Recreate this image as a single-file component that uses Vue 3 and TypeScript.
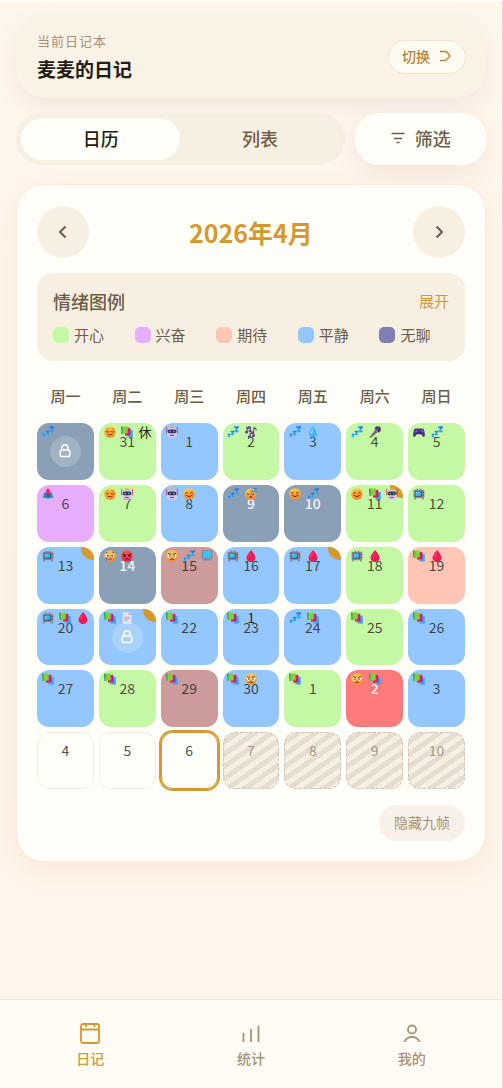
<script setup lang="ts">
import { ref } from 'vue'

type Tone =
  | 'happy' | 'excited' | 'expect' | 'calm' | 'mist' | 'rose' | 'angry' | 'blank' | 'future'

interface Day {
  n: number
  tone: Tone
  marks?: string[]
  corner?: boolean
  locked?: boolean
  today?: boolean
}

const view = ref<'calendar' | 'list'>('calendar')
const weekdays = ['周一', '周二', '周三', '周四', '周五', '周六', '周日']
const moods: { name: string; tone: string }[] = [
  { name: '开心', tone: 'happy' },
  { name: '兴奋', tone: 'excited' },
  { name: '期待', tone: 'expect' },
  { name: '平静', tone: 'calm' },
  { name: '无聊', tone: 'bored' },
]

const days: Day[] = [
  { n: 30, tone: 'mist', marks: ['zzz'], locked: true },
  { n: 31, tone: 'happy', marks: ['relief', 'books', '休'] },
  { n: 1, tone: 'calm', marks: ['robot'] },
  { n: 2, tone: 'happy', marks: ['zzz', 'notes'] },
  { n: 3, tone: 'calm', marks: ['zzz', 'drop'] },
  { n: 4, tone: 'happy', marks: ['zzz', 'mic'] },
  { n: 5, tone: 'happy', marks: ['game', 'zzz'] },
  { n: 6, tone: 'excited', marks: ['outbox'] },
  { n: 7, tone: 'happy', marks: ['relief', 'robot'] },
  { n: 8, tone: 'calm', marks: ['robot', 'smile'] },
  { n: 9, tone: 'mist', marks: ['zzz', 'sleep'] },
  { n: 10, tone: 'mist', marks: ['smile', 'zzz'] },
  { n: 11, tone: 'happy', marks: ['smile', 'books', 'robot'], corner: true },
  { n: 12, tone: 'happy', marks: ['tv'] },
  { n: 13, tone: 'calm', marks: ['tv'], corner: true },
  { n: 14, tone: 'mist', marks: ['cry', 'rage'] },
  { n: 15, tone: 'rose', marks: ['mad', 'zzz', 'laptop'] },
  { n: 16, tone: 'calm', marks: ['tv', 'blood'] },
  { n: 17, tone: 'calm', marks: ['tv', 'blood'], corner: true },
  { n: 18, tone: 'happy', marks: ['tv', 'blood'] },
  { n: 19, tone: 'expect', marks: ['books', 'blood'] },
  { n: 20, tone: 'calm', marks: ['tv', 'books', 'blood'] },
  { n: 21, tone: 'calm', marks: ['books', 'page'], corner: true, locked: true },
  { n: 22, tone: 'calm', marks: ['books'] },
  { n: 23, tone: 'calm', marks: ['books', '1'] },
  { n: 24, tone: 'calm', marks: ['zzz', 'books'] },
  { n: 25, tone: 'happy', marks: ['books'] },
  { n: 26, tone: 'calm', marks: ['books'] },
  { n: 27, tone: 'calm', marks: ['books'] },
  { n: 28, tone: 'happy', marks: ['books'] },
  { n: 29, tone: 'rose', marks: ['books'] },
  { n: 30, tone: 'calm', marks: ['books', 'mad'] },
  { n: 1, tone: 'happy', marks: ['books'] },
  { n: 2, tone: 'angry', marks: ['mad', 'books'] },
  { n: 3, tone: 'calm', marks: ['books'] },
  { n: 4, tone: 'blank' },
  { n: 5, tone: 'blank' },
  { n: 6, tone: 'blank', today: true },
  { n: 7, tone: 'future' },
  { n: 8, tone: 'future' },
  { n: 9, tone: 'future' },
  { n: 10, tone: 'future' },
]

const isText = (mark: string): boolean => mark === '休' || mark === '1'
</script>

<template>
  <div class="page">
    <svg class="sprite" aria-hidden="true">
      <defs>
        <linearGradient id="g-face" x1="0" y1="0" x2="0.3" y2="1">
          <stop offset="0" stop-color="#ffd445" />
          <stop offset="1" stop-color="#f98a2c" />
        </linearGradient>
        <linearGradient id="g-rage" x1="0" y1="0" x2="0" y2="1">
          <stop offset="0" stop-color="#ff5a3c" />
          <stop offset="1" stop-color="#e2205c" />
        </linearGradient>
        <linearGradient id="g-z" x1="1" y1="0" x2="0" y2="1">
          <stop offset="0" stop-color="#1769f0" />
          <stop offset="1" stop-color="#38c6f8" />
        </linearGradient>
        <linearGradient id="g-screen" x1="0" y1="0" x2="1" y2="1">
          <stop offset="0" stop-color="#4fdcff" />
          <stop offset="1" stop-color="#2a93d6" />
        </linearGradient>
        <linearGradient id="g-book" x1="0" y1="0" x2="1" y2="1">
          <stop offset="0" stop-color="#2fd3ec" />
          <stop offset="1" stop-color="#4a8bf4" />
        </linearGradient>
      </defs>
      <symbol id="m-relief" viewBox="0 0 16 16">
        <circle cx="8" cy="8" r="7.8" fill="url(#g-face)" />
        <path d="M2.6 7.5q1.9 1.6 3.8 0M9.6 7.5q1.9 1.6 3.8 0M5.5 11.2q2.5 1.6 5 0" fill="none" stroke="#6b2b1d" stroke-width="1.2" stroke-linecap="round" />
        <path d="M3 4.6q1-1 2.4-.9M10.6 3.7q1.4-.1 2.4.9" fill="none" stroke="#b76212" />
      </symbol>
      <symbol id="m-smile" viewBox="0 0 16 16">
        <circle cx="8" cy="8" r="7.8" fill="url(#g-face)" />
        <ellipse cx="3.3" cy="9.6" rx="2" ry="1.4" fill="#ff6650" opacity=".5" />
        <ellipse cx="12.7" cy="9.6" rx="2" ry="1.4" fill="#ff6650" opacity=".5" />
        <path d="M3.3 6.8q1.4-2 2.9 0M9.8 6.8q1.4-2 2.9 0M4.8 10.2q3.2 3 6.4 0" fill="none" stroke="#5a241d" stroke-width="1.3" stroke-linecap="round" />
      </symbol>
      <symbol id="m-sleep" viewBox="0 0 16 16">
        <circle cx="7.8" cy="8.2" r="7.6" fill="url(#g-face)" />
        <path d="M2.4 7.9q1.8 1.4 3.7 0M8.4 7.9q1.8 1.4 3.7 0" fill="none" stroke="#5a241d" stroke-width="1.2" />
        <ellipse cx="7.6" cy="12" rx="1.7" ry="1.8" fill="#c72056" />
        <path d="M11.2.8h4l-3.6 4.1h4M8.3 3h2L8.5 5.2h2" fill="none" stroke="#2584f3" stroke-width="1.3" />
      </symbol>
      <symbol id="m-cry" viewBox="0 0 16 16">
        <circle cx="8" cy="8" r="7.8" fill="url(#g-face)" />
        <circle cx="4.8" cy="7.2" r="2.2" fill="#fff" />
        <circle cx="11.2" cy="7.2" r="2.2" fill="#fff" />
        <circle cx="5.1" cy="7.5" r="1.2" fill="#3d2438" />
        <circle cx="10.9" cy="7.5" r="1.2" fill="#3d2438" />
        <path d="M2.6 4.1l2.5-1.4M10.9 2.7l2.5 1.4M6 12.4q2-1.6 4 0" fill="none" stroke="#6f3517" stroke-width="1.1" />
        <path d="M3.3 9.3q-3 4 0 5.2 3-1.2 0-5.2" fill="#2287f5" />
      </symbol>
      <symbol id="m-mad" viewBox="0 0 16 16">
        <circle cx="8" cy="8" r="7.8" fill="url(#g-face)" />
        <circle cx="4.7" cy="7.8" r="2.5" fill="#fff" />
        <circle cx="11.3" cy="7.8" r="2.5" fill="#fff" />
        <circle cx="5.2" cy="8.1" r="1.1" fill="#412a35" />
        <circle cx="10.8" cy="8.1" r="1.1" fill="#412a35" />
        <path d="M2.8 4.5l3.8 1.8M13.2 4.5L9.4 6.3M5.5 12.8q2.5-2 5 0" fill="none" stroke="#5b291f" stroke-width="1.2" />
      </symbol>
      <symbol id="m-rage" viewBox="0 0 16 16">
        <circle cx="8" cy="8" r="7.8" fill="url(#g-rage)" />
        <circle cx="4.7" cy="8" r="1.5" fill="#4d1431" />
        <circle cx="11.3" cy="8" r="1.5" fill="#4d1431" />
        <path d="M2.4 5.1l4.3 1.9M13.6 5.1L9.3 7M5.4 12.3q2.6-2.2 5.2 0" fill="none" stroke="#4d1431" stroke-width="1.3" />
      </symbol>
      <symbol id="m-zzz" viewBox="0 0 16 16">
        <g fill="none" stroke="url(#g-z)" stroke-linejoin="round">
          <path d="M9.2 1.8l5.7-.5-4.500 6.200 5-.4" stroke-width="2.2" />
          <path d="M4.600 7.500l4-.3-3 4.100 3.800-.3" stroke-width="1.800" />
          <path d="M.8 11.300l2.900-.2-2.500 3.300 3-.2" stroke-width="1.400" />
        </g>
      </symbol>
      <symbol id="m-books" viewBox="0 0 16 16">
        <path d="M7.500 5.300l8.200-.3v10.300H8.600z" fill="url(#g-book)" />
        <path d="M4 3l8.300-.6v9.800l-6.700.7z" fill="#e62250" />
        <path d="M10.700 3.500h1.600v8.600h-1.600z" fill="#a91ea0" />
        <path d="M0 1l8.900-.7v9.300L.8 10.700z" fill="#82cf43" />
        <path d="M0 1l2-.2v9.800l-1.200.1z" fill="#309a59" />
      </symbol>
      <symbol id="m-robot" viewBox="0 0 16 16">
        <path d="M.9 1v9M15.100 1v9" stroke="#e02e6d" stroke-width="1.200" />
        <ellipse cx="8" cy="2.100" rx="3.100" ry="1.800" fill="#f2aa2b" />
        <path d="M3.200 2.600h9.600l1.800 8.900q-.6 4.200-6.600 4.200t-6.600-4.200z" fill="#d9c5ea" />
        <rect x="2.200" y="4.700" width="11.600" height="5" rx="2.400" fill="#302f54" />
        <circle cx="5.500" cy="7.200" r="1.200" fill="#25bce8" />
        <circle cx="10.500" cy="7.200" r="1.200" fill="#25bce8" />
        <path d="M5.500 12.600h5" stroke="#5d4170" stroke-width="1.300" />
      </symbol>
      <symbol id="m-notes" viewBox="0 0 16 16">
        <g fill="#67458d" stroke="#67458d" stroke-width="1.500">
          <ellipse cx="2" cy="8.200" rx="1.400" ry="1.100" />
          <ellipse cx="6.600" cy="6.800" rx="1.200" ry="1" />
          <path d="M3.300 8L2.200 2.200 6.700.9l1.100 5.700M2.300 3.800l4.600-1.300" fill="none" />
          <ellipse cx="10" cy="8.600" rx="1.300" ry="1" />
          <path d="M11.200 8.500l.8-6.300q2.800.4 3.200 3.800" fill="none" />
          <ellipse cx="6" cy="14.300" rx="1.400" ry="1.100" />
          <ellipse cx="11" cy="13.300" rx="1.400" ry="1.100" />
          <path d="M7.300 14l-.5-3.600 5-.8.500 3.500" fill="none" />
        </g>
      </symbol>
      <symbol id="m-drop" viewBox="0 0 16 16">
        <path d="M8 0Q3 6.800 3 10.400a5 5 0 0 0 10 0Q13 6.800 8 0" fill="#3fb0f0" />
        <path d="M8 2Q4.600 8 5 11q3 1 3-9" fill="#8fe0ff" />
      </symbol>
      <symbol id="m-blood" viewBox="0 0 16 16">
        <path d="M8.200 0Q2 6.800 2 10.200a6 6 0 0 0 12 0Q14 6.800 8.200 0" fill="#f01a55" />
        <path d="M8 2Q4 7.500 4.200 10q2 .7 3.800-8" fill="#ff4a72" />
      </symbol>
      <symbol id="m-mic" viewBox="0 0 16 16">
        <path d="M7.800 5.500l3 3-8.200 7.200q-1.600.5-1.500-1z" fill="#77677c" />
        <circle cx="11.800" cy="4.300" r="4.100" fill="#45354d" />
        <path d="M8.100 4.500l3.600 3.700" stroke="#b59cc0" stroke-width="1.400" />
        <path d="M11 2l3 3M13 1.400L9.800 4.600" stroke="#8d7893" stroke-width=".8" />
      </symbol>
      <symbol id="m-game" viewBox="0 0 16 16">
        <path d="M3.300 3.200h9.400q2.100 0 2.600 4l.6 5.400q-.8 3.200-3.400.6L10.800 11H5.200l-1.700 2.200q-2.600 2.600-3.400-.6l.6-5.400q.5-4 2.600-4" fill="#49318c" />
        <path d="M2.800 6.800h3M4.300 5.300v3" stroke="#8a75cf" />
        <circle cx="11.700" cy="5.400" r=".9" fill="#f05375" />
        <circle cx="13.100" cy="7" r=".9" fill="#3fc3e8" />
        <circle cx="6.500" cy="9" r="1.200" fill="#271953" />
        <circle cx="10" cy="9" r="1.200" fill="#271953" />
      </symbol>
      <symbol id="m-outbox" viewBox="0 0 16 16">
        <path d="M3 6h10l2.500 9.400H.5z" fill="#2d7fc4" />
        <path d="M.9 13h3.900l1 1h4.400l1-1h3.900l.4 2.600H.5z" fill="#c3cfe2" />
        <path d="M6.300 5h3.400v6.500H6.300z" fill="#7b3a72" />
        <path d="M8 0l3.700 4.800H9.700v3H6.300v-3h-2z" fill="#e72756" />
      </symbol>
      <symbol id="m-tv" viewBox="0 0 16 16">
        <path d="M5 .8l2 2M11 .8l-2 2M3.500 12l-1 3.500M12.500 12l1 3.500" stroke="#695263" stroke-width="1.300" />
        <rect x=".8" y="2.300" width="14.400" height="11.200" rx="1.400" fill="#9a8796" />
        <rect x="2.400" y="3.800" width="9.400" height="8.200" rx="1.200" fill="#4a4a5e" />
        <rect x="3.400" y="4.800" width="7.400" height="6.200" rx=".8" fill="url(#g-screen)" />
        <circle cx="13.500" cy="6" r=".9" fill="#493b51" />
        <circle cx="13.500" cy="9.500" r=".9" fill="#493b51" />
      </symbol>
      <symbol id="m-laptop" viewBox="0 0 16 16">
        <rect x="1" y=".5" width="14" height="10.900" rx="1" fill="#5f6f8c" />
        <rect x="1.900" y="1.300" width="12.200" height="9.200" fill="#3fc1f2" />
        <path d="M1.400 11.800h13.200l1.400 3H0z" fill="#a9a1b8" />
        <path d="M2.400 13h11.200" stroke="#656178" stroke-width=".8" />
      </symbol>
      <symbol id="m-page" viewBox="0 0 16 16">
        <path d="M2.300.2h7.900l3.800 3.900v11.700H2.300z" fill="#e5e1ee" />
        <path d="M10.200.2v3.900H14z" fill="#bcb2d1" />
        <path d="M4.400 7h7M4.400 9.100h7M4.400 11.200h4" stroke="#a69ab9" />
      </symbol>
    </svg>

    <main class="content">
      <header class="book">
        <div>
          <p class="book-label">当前日记本</p>
          <h1 class="book-name">麦麦的日记</h1>
        </div>
        <button class="switch" type="button">
          切换
          <svg width="14" height="14" viewBox="0 0 14 14" aria-hidden="true">
            <path d="M2 2.500h5.500Q9 2.500 12 7.200L9.500 9.500 7.500 11.500H2M9.500 4.200L12 7.200" fill="none" stroke="currentColor" stroke-width="1.300" />
          </svg>
        </button>
      </header>

      <div class="toolbar">
        <div class="tabs" role="tablist">
          <button class="tab" type="button" role="tab" :aria-selected="view === 'calendar'" :class="{ active: view === 'calendar' }" @click="view = 'calendar'">日历</button>
          <button class="tab" type="button" role="tab" :aria-selected="view === 'list'" :class="{ active: view === 'list' }" @click="view = 'list'">列表</button>
        </div>
        <button class="filter" type="button">
          <svg width="16" height="16" viewBox="0 0 16 16" aria-hidden="true">
            <path d="M1.500 3.500h13M4 8.500h8M6.500 12.500h3" stroke="currentColor" stroke-width="1.300" />
          </svg>
          筛选
        </button>
      </div>

      <section class="card">
        <div class="month">
          <button class="arrow" type="button" aria-label="上个月">
            <svg width="16" height="16" viewBox="0 0 16 16" aria-hidden="true"><path d="M10.500 2.500L5 8l5.500 5.500" /></svg>
          </button>
          <h2 class="month-name">2026年4月</h2>
          <button class="arrow" type="button" aria-label="下个月">
            <svg width="16" height="16" viewBox="0 0 16 16" aria-hidden="true"><path d="M5.500 2.500L11 8l-5.500 5.500" /></svg>
          </button>
        </div>

        <div class="legend">
          <div class="legend-head">
            <h3 class="legend-title">情绪图例</h3>
            <button class="expand" type="button">展开</button>
          </div>
          <ul class="moods">
            <li v-for="m in moods" :key="m.name"><span class="swatch" :class="m.tone"></span>{{ m.name }}</li>
          </ul>
        </div>

        <div class="week">
          <span v-for="w in weekdays" :key="w">{{ w }}</span>
        </div>

        <div class="days">
          <button v-for="(d, i) in days" :key="i" class="day" type="button" :class="[d.tone, { today: d.today }]" :disabled="d.tone === 'future'">
            <span v-if="!d.locked" class="num">{{ d.n }}</span>
            <span v-if="d.corner" class="corner"></span>
            <span v-if="d.marks" class="marks">
              <span v-for="mark in d.marks" :key="mark" class="mark">
                <template v-if="isText(mark)">{{ mark }}</template>
                <svg v-else width="12" height="12" aria-hidden="true"><use :href="'#m-' + mark" /></svg>
              </span>
            </span>
            <span v-if="d.locked" class="lock">
              <svg width="16" height="16" viewBox="0 0 16 16" aria-hidden="true">
                <rect x="3.200" y="7" width="9.600" height="6.600" rx="1.600" />
                <path d="M5 7V4.800a3 3 0 0 1 6 0V7" />
              </svg>
            </span>
          </button>
        </div>

        <div class="card-foot">
          <button class="hide" type="button">隐藏九帧</button>
        </div>
      </section>
    </main>

    <nav class="nav">
      <a class="nav-item current" href="#diary" aria-current="page">
        <svg width="24" height="24" viewBox="0 0 24 24" aria-hidden="true">
          <rect x="3" y="3" width="18" height="19" rx="2" /><path d="M3 8.500h18M8 2v4M16.500 2v4" />
        </svg>
        日记
      </a>
      <a class="nav-item" href="#stats">
        <svg width="24" height="24" viewBox="0 0 24 24" aria-hidden="true"><path d="M4.500 12v9M12 8v13M19.500 4.500V21" /></svg>
        统计
      </a>
      <a class="nav-item" href="#me">
        <svg width="24" height="24" viewBox="0 0 24 24" aria-hidden="true">
          <circle cx="12" cy="8.500" r="4" /><path d="M4.500 21q2-5 7.500-5t7.500 5" />
        </svg>
        我的
      </a>
    </nav>
  </div>
</template>

<style>
body {
  margin: 0;
  background: #fff6ec;
}
</style>

<style scoped>
.page {
  box-sizing: border-box;
  min-height: 100vh;
  display: flex;
  flex-direction: column;
  border-top: 1px solid #fff;
  border-right: 1px solid #d6d6d6;
  background: linear-gradient(180deg, #fff7ed, #fff5ea);
  color: #6d5c48;
  font-family: "Noto Sans CJK SC", "Noto Sans", sans-serif;
}
.sprite {
  position: absolute;
  width: 0;
  height: 0;
}
button {
  margin: 0;
  padding: 0;
  border: 0;
  background: none;
  color: inherit;
  font: inherit;
}
h1, h2, h3, p, ul {
  margin: 0;
  padding: 0;
}
.content {
  flex: 1;
  padding: 15px 16px 24px;
}
.book {
  display: flex;
  align-items: center;
  justify-content: space-between;
  padding: 15px 20px 15px 21px;
  border-radius: 30px;
  background: #faf2e5;
  box-shadow: 0 8px 24px rgba(120, 80, 100, 0.1);
}
.book-label {
  color: #a6917d;
  font-size: 13px;
  line-height: 20px;
  letter-spacing: 1px;
}
.book-name {
  margin-top: 4px;
  color: #241c14;
  font-size: 19px;
  line-height: 28px;
  font-weight: 700;
}
.switch {
  display: flex;
  align-items: center;
  gap: 8px;
  padding: 0 13px 2px;
  height: 34px;
  border: 1px solid #f3e4c8;
  border-radius: 17px;
  background: #fffbf3;
  color: #b98233;
  font-size: 14px;
  font-weight: 500;
}
.toolbar {
  display: grid;
  grid-template-columns: 5fr 2fr;
  gap: 10px;
  margin-top: 15px;
}
.tabs {
  display: flex;
  padding: 5px;
  border-radius: 26px;
  background: #f7efe2;
}
.tab {
  flex: 1;
  height: 42px;
  padding-bottom: 2px;
  border-radius: 21px;
  font-size: 18px;
  font-weight: 500;
}
.tab.active {
  background: #fffef9;
  color: #241c14;
}
.filter {
  display: flex;
  align-items: center;
  justify-content: center;
  gap: 9px;
  padding-bottom: 2px;
  border-radius: 24px;
  background: #fffef9;
  box-shadow: 0 8px 24px rgba(120, 80, 100, 0.1);
  font-size: 18px;
  font-weight: 500;
}
.card {
  margin-top: 19px;
  padding: 21px 20px 20px;
  border: 1px solid #f6ebdd;
  border-radius: 28px;
  background: #fffef9;
  box-shadow: 0 8px 30px rgba(190, 120, 60, 0.1);
}
.month {
  display: flex;
  align-items: center;
  justify-content: space-between;
}
.arrow {
  display: grid;
  place-items: center;
  width: 52px;
  height: 52px;
  border-radius: 50%;
  background: #f7efe2;
}
.arrow path {
  fill: none;
  stroke: #6d5c48;
  stroke-width: 2;
}
.month-name {
  color: #d6992f;
  font-size: 25px;
  line-height: 36px;
  font-weight: 700;
}
.legend {
  margin-top: 15px;
  padding: 16px 16px 15px;
  border-radius: 16px;
  background: #f7efe2;
}
.legend-head {
  display: flex;
  align-items: center;
  justify-content: space-between;
}
.legend-title {
  font-size: 18px;
  line-height: 24px;
  font-weight: 500;
}
.expand {
  color: #d6992f;
  font-size: 15px;
  line-height: 24px;
}
.moods {
  display: grid;
  grid-template-columns: repeat(5, 1fr);
  gap: 12px;
  margin-top: 11px;
  list-style: none;
  font-size: 15px;
  line-height: 22px;
}
.moods li {
  display: flex;
  align-items: center;
  gap: 5px;
  white-space: nowrap;
}
.swatch {
  width: 16px;
  height: 16px;
  border-radius: 5px;
}
.week,
.days {
  display: grid;
  grid-template-columns: repeat(7, 1fr);
  gap: 5px;
}
.week {
  margin: 23px 0 16px;
  text-align: center;
  font-size: 15px;
  line-height: 23px;
  font-weight: 500;
}
.day {
  position: relative;
  box-sizing: border-box;
  display: flex;
  justify-content: center;
  aspect-ratio: 1;
  min-width: 0;
  padding-top: 8px;
  border-radius: 12px;
  overflow: hidden;
}
.num {
  color: rgba(36, 28, 20, 0.8);
  font-size: 14px;
  line-height: 20px;
}
.happy { background: #c5f8a5; }
.excited { background: #e7adff; }
.expect { background: #ffc6b5; }
.calm { background: #94c7ff; }
.bored { background: #807fb4; }
.mist { background: #8b9fb7; }
.rose { background: #cc9b9c; }
.angry { background: #ff7b7a; }
.mist .num,
.angry .num {
  color: rgba(255, 255, 255, 0.9);
  font-weight: 500;
}
.blank,
.future {
  padding-top: 7px;
  border: 1px solid #f6ebdd;
}
.future {
  border: 1px dashed #cfc3b4;
  background: repeating-linear-gradient(145deg, #f7efe2 0 5px, #e5ddd1 5px 10px);
}
.future .num {
  color: #a89886;
}
.today {
  overflow: visible;
  border-color: #d6992f;
  box-shadow: 0 0 0 2px #d6992f;
}
.corner {
  position: absolute;
  top: 0;
  right: 0;
  width: 13px;
  height: 13px;
  border-bottom-left-radius: 12px;
  background: #d6992f;
}
.marks {
  position: absolute;
  top: 3px;
  left: 2px;
  right: 2px;
  display: grid;
  grid-template-columns: repeat(3, 1fr);
}
.mark {
  display: grid;
  place-items: center;
  height: 12px;
  color: #241c14;
  font-size: 13px;
  line-height: 12px;
}
.mark svg {
  display: block;
}
.lock {
  position: absolute;
  inset: 0;
  display: grid;
  place-items: center;
}
.lock::before {
  content: "";
  grid-area: 1 / 1;
  width: 31px;
  height: 31px;
  border-radius: 50%;
  background: rgba(255, 255, 255, 0.2);
}
.lock svg {
  grid-area: 1 / 1;
  z-index: 1;
  fill: none;
  stroke: #fff;
  stroke-width: 1.5;
}
.card-foot {
  display: flex;
  justify-content: flex-end;
  margin-top: 16px;
}
.hide {
  height: 36px;
  padding: 0 15px 2px;
  border-radius: 18px;
  background: #f9f1e9;
  color: #a6917d;
  font-size: 14px;
}
.nav {
  position: sticky;
  bottom: 0;
  display: grid;
  grid-template-columns: repeat(3, 1fr);
  padding: 21px 10px 19px;
  border-top: 1px solid #f3e9da;
  background: #fffcf5;
}
.nav-item {
  display: flex;
  flex-direction: column;
  align-items: center;
  gap: 2px;
  color: #a6917d;
  font-size: 14px;
  line-height: 22px;
  font-weight: 500;
  text-decoration: none;
}
.nav-item.current {
  color: #d6992f;
}
.nav-item svg {
  fill: none;
  stroke: currentColor;
  stroke-width: 1.8;
}
</style>
